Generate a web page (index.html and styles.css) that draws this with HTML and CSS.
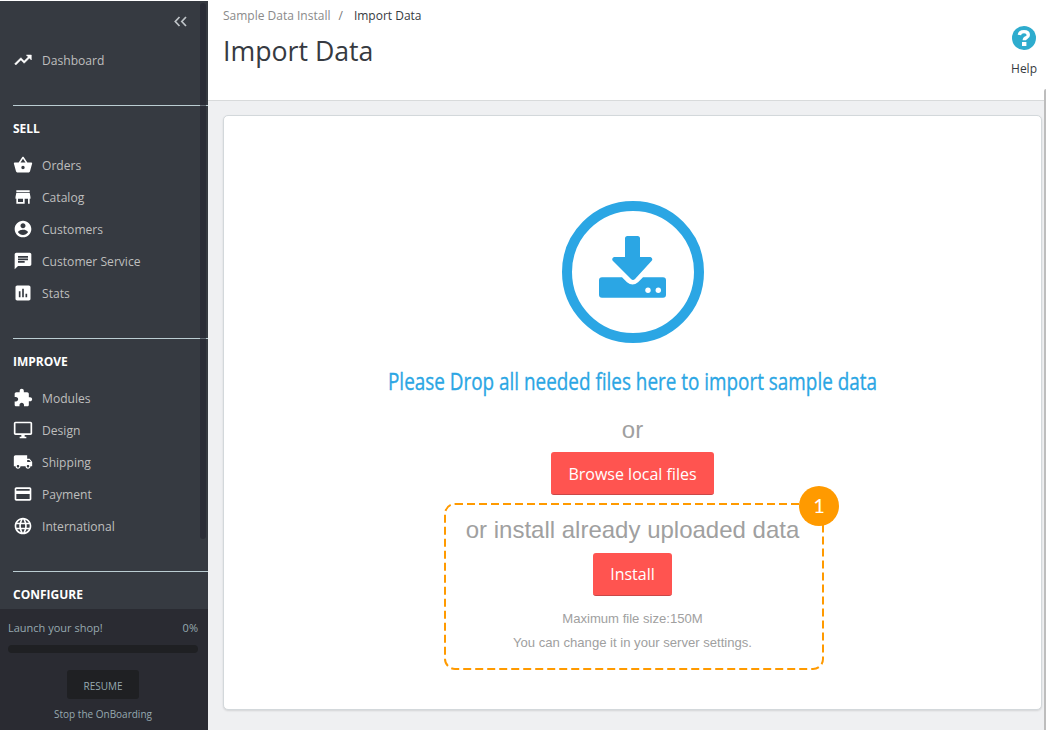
FILE: index.html
```html
<!DOCTYPE html>
<html lang="en">
<head>
<meta charset="utf-8">
<title>Import Data</title>
<link rel="stylesheet" href="styles.css">
</head>
<body>
<div class="app">
  <aside class="sidebar">
    <nav class="nav">
      <div class="collapse"><svg width="14" height="11" viewBox="0 0 14 11"><path d="M6.500 1 2.300 5.500 6.500 10M13 1 8.800 5.500l4.200 4.500" fill="none" stroke="#bfc4c8" stroke-width="1.7"/></svg></div>
      <a class="item dash"><svg class="ico" viewBox="0 0 24 24"><path d="M16 6l2.290 2.290-4.880 4.880-4-4L2 16.590 3.410 18l6-6 4 4 6.300-6.290L22 12V6z" stroke="#fff" stroke-width=".6"/></svg><span>Dashboard</span></a>
      <section class="group">
        <h2>SELL</h2>
        <a class="item"><svg class="ico" viewBox="0 0 24 24"><path d="M17.210 9l-4.380-6.560c-.19-.28-.51-.42-.83-.42-.32 0-.64.14-.83.43L6.790 9H2c-.55 0-1 .45-1 1 0 .09.01.18.04.27l2.540 9.270c.23.84 1 1.460 1.920 1.460h13c.92 0 1.690-.62 1.930-1.460l2.540-9.270L23 10c0-.55-.45-1-1-1h-4.790zM9 9l3-4.400L15 9H9zm3 8c-1.100 0-2-.9-2-2s.9-2 2-2 2 .9 2 2-.9 2-2 2z"/></svg><span>Orders</span></a>
        <a class="item"><svg class="ico" viewBox="0 0 24 24"><path d="M20 4H4v2h16V4zm1 10v-2l-1-5H4l-1 5v2h1v6h10v-6h4v6h2v-6h1zm-9 4H6v-4h6v4z"/></svg><span>Catalog</span></a>
        <a class="item"><svg class="ico" viewBox="0 0 24 24"><path d="M12 2C6.480 2 2 6.480 2 12s4.480 10 10 10 10-4.480 10-10S17.520 2 12 2zm0 3c1.660 0 3 1.340 3 3s-1.340 3-3 3-3-1.340-3-3 1.340-3 3-3zm0 14.200c-2.500 0-4.710-1.280-6-3.220.03-1.990 4-3.080 6-3.080 1.990 0 5.970 1.090 6 3.080-1.290 1.940-3.500 3.220-6 3.220z"/></svg><span>Customers</span></a>
        <a class="item"><svg class="ico" viewBox="0 0 24 24"><path d="M20 2H4c-1.100 0-1.990.9-1.990 2L2 22l4-4h14c1.100 0 2-.9 2-2V4c0-1.100-.9-2-2-2zM6 9h12v2H6V9zm8 5H6v-2h8v2zm4-6H6V6h12v2z"/></svg><span>Customer Service</span></a>
        <a class="item"><svg class="ico" viewBox="0 0 24 24"><path d="M19 3H5c-1.100 0-2 .9-2 2v14c0 1.100.9 2 2 2h14c1.100 0 2-.9 2-2V5c0-1.100-.9-2-2-2zM9 17H7v-7h2v7zm4 0h-2V7h2v10zm4 0h-2v-4h2v4z"/></svg><span>Stats</span></a>
      </section>
      <section class="group">
        <h2>IMPROVE</h2>
        <a class="item"><svg class="ico" viewBox="0 0 24 24"><path d="M20.500 11H19V7c0-1.100-.9-2-2-2h-4V3.500C13 2.120 11.880 1 10.500 1S8 2.120 8 3.500V5H4c-1.100 0-1.990.9-1.990 2v3.800H3.500c1.490 0 2.700 1.210 2.700 2.700s-1.210 2.700-2.700 2.700H2V20c0 1.100.9 2 2 2h3.800v-1.500c0-1.490 1.210-2.700 2.700-2.700 1.490 0 2.700 1.210 2.700 2.700V22H17c1.100 0 2-.9 2-2v-4h1.500c1.380 0 2.500-1.120 2.500-2.500S21.880 11 20.500 11z"/></svg><span>Modules</span></a>
        <a class="item"><svg class="ico" viewBox="0 0 24 24"><path d="M21 2H3c-1.100 0-2 .9-2 2v12c0 1.100.9 2 2 2h7v2H8v2h8v-2h-2v-2h7c1.100 0 2-.9 2-2V4c0-1.100-.9-2-2-2zm0 14H3V4h18v12z"/></svg><span>Design</span></a>
        <a class="item"><svg class="ico" viewBox="0 0 24 24"><path d="M20 8h-3V4H3c-1.100 0-2 .9-2 2v11h2c0 1.660 1.340 3 3 3s3-1.340 3-3h6c0 1.660 1.340 3 3 3s3-1.340 3-3h2v-5l-3-4zM6 18.500c-.83 0-1.500-.67-1.500-1.500s.67-1.500 1.500-1.500 1.500.67 1.500 1.500-.67 1.500-1.500 1.500zm13.500-9l1.960 2.500H17V9.500h2.500zm-1.500 9c-.83 0-1.500-.67-1.500-1.500s.67-1.500 1.500-1.500 1.500.67 1.500 1.500-.67 1.500-1.500 1.500z"/></svg><span>Shipping</span></a>
        <a class="item"><svg class="ico" viewBox="0 0 24 24"><path d="M20 4H4c-1.110 0-1.990.89-1.990 2L2 18c0 1.110.89 2 2 2h16c1.110 0 2-.89 2-2V6c0-1.110-.89-2-2-2zm0 14H4v-6h16v6zm0-10H4V6h16v2z"/></svg><span>Payment</span></a>
        <a class="item"><svg class="ico" viewBox="0 0 24 24"><path d="M11.990 2C6.470 2 2 6.480 2 12s4.470 10 9.990 10C17.520 22 22 17.520 22 12S17.520 2 11.990 2zm6.930 6h-2.950c-.32-1.250-.78-2.450-1.380-3.560 1.840.63 3.370 1.910 4.330 3.560zM12 4.040c.83 1.200 1.480 2.530 1.910 3.960h-3.820c.43-1.430 1.080-2.760 1.910-3.960zM4.260 14C4.100 13.360 4 12.690 4 12s.1-1.360.26-2h3.380c-.08.66-.14 1.320-.14 2s.06 1.340.14 2H4.260zm.82 2h2.950c.32 1.250.78 2.450 1.380 3.560-1.840-.63-3.370-1.900-4.330-3.560zm2.950-8H5.080c.96-1.660 2.490-2.930 4.330-3.560C8.810 5.550 8.350 6.750 8.030 8zM12 19.960c-.83-1.200-1.480-2.530-1.910-3.960h3.820c-.43 1.430-1.080 2.760-1.910 3.960zM14.340 14H9.660c-.09-.66-.16-1.320-.16-2s.07-1.350.16-2h4.680c.09.65.16 1.320.16 2s-.07 1.340-.16 2zm.25 5.560c.6-1.110 1.060-2.310 1.380-3.560h2.950c-.96 1.650-2.490 2.930-4.330 3.560zM16.360 14c.08-.66.14-1.320.14-2s-.06-1.340-.14-2h3.380c.16.64.26 1.310.26 2s-.1 1.360-.26 2h-3.380z"/></svg><span>International</span></a>
      </section>
      <section class="group"><h2>CONFIGURE</h2></section>
      <i class="thumb"></i>
    </nav>
    <div class="onboarding">
      <div class="launch"><span>Launch your shop!</span><span class="pct">0%</span></div>
      <div class="progress"></div>
      <button class="resume">RESUME</button>
      <a class="stop">Stop the OnBoarding</a>
    </div>
  </aside>
  <main class="main">
    <header class="header">
      <div>
        <div class="crumbs"><span>Sample Data Install</span><span class="sep">/</span><span class="here">Import Data</span></div>
        <h1>Import Data</h1>
      </div>
      <a class="help">
        <svg width="24" height="24" viewBox="0 0 24 24"><circle cx="12" cy="12" r="12" fill="#2eacce"/><path d="M7.400 9Q7.700 5.600 12 5.600q4.300 0 4.300 3.300 0 1.700-1.800 2.700-2.200 1-2.200 2.700" fill="none" stroke="#fff" stroke-width="3.400"/><path d="M10 16h4.400v4h-4.400z" fill="#fff"/></svg>
        <span>Help</span>
      </a>
    </header>
    <div class="content">
      <div class="card">
        <svg class="drop" width="142" height="142" viewBox="0 0 142 142" fill="#2ba6e4">
          <circle cx="71" cy="71" r="66" fill="none" stroke="#2ba6e4" stroke-width="10"/>
          <path d="M65.500 35h10q2.500 0 2.500 2.500V56h10.500q3 1.500 1 4L73 78q-2 2-4 0L51 60q-2-2.500 1-4h11V37.500q0-2.500 2.500-2.500z"/>
          <path d="M40 76.300h20l5 5q5.700 4.500 11 0l5-5h20q3 0 3 3v14.500q0 3-3 3H40q-3 0-3-3v-14.500q0-3 3-3z"/>
          <circle cx="86" cy="89.200" r="2.700" fill="#fff"/><circle cx="96.300" cy="89.200" r="2.700" fill="#fff"/>
        </svg>
        <svg class="title" width="500" height="34"><text x="5" y="25" textLength="489" lengthAdjust="spacingAndGlyphs">Please Drop all needed files here to import sample data</text></svg>
        <p class="or">or</p>
        <button class="btn browse">Browse local files</button>
        <div class="install-box">
          <svg class="dashes" width="380" height="167"><rect x="1" y="1" width="378" height="165" rx="10" fill="none" stroke="#ff9a00" stroke-width="2" stroke-dasharray="8 4"/></svg>
          <p class="or">or install already uploaded data</p>
          <button class="btn install">Install</button>
          <p class="note">Maximum file size:150M</p>
          <p class="note">You can change it in your server settings.</p>
          <b class="badge">1</b>
        </div>
      </div>
    </div>
    <i class="page-thumb"></i>
  </main>
</div>
</body>
</html>
```
FILE: styles.css
```css
* { box-sizing: border-box; }
body { margin: 0; background: #fff; font-family: "Open Sans", sans-serif; overflow: hidden; }
h1, h2, p { margin: 0; font-weight: 400; }
button { border: 0; padding: 0; font-family: inherit; }
.app { display: flex; height: 730px; }

.sidebar { width: 208px; margin-top: 1px; background: #363a41; display: flex; flex-direction: column; }
.nav { height: 608px; position: relative; overflow: hidden; }
.collapse { height: 43px; padding: 15px 21px 0 0; text-align: right; line-height: 0; }
.item { display: flex; align-items: center; height: 32px; padding-left: 12.5px; gap: 9.5px; color: #bebebe; font-size: 12.1px; }
.ico { width: 20px; height: 20px; fill: #fff; }
.dash { margin-bottom: 29px; }
.group { margin-left: 13px; border-top: 1px solid #bbcdd2; padding-bottom: 29px; }
.group .item { padding-left: 0; margin-left: -.5px; }
.group h2 { height: 43px; padding-top: 14px; line-height: 18px; font-size: 12px; font-weight: 700; color: #fff; }
.thumb { position: absolute; left: 200px; top: 2px; width: 6px; height: 536px; border-radius: 3px; background: rgba(37, 37, 48, .6); }

.onboarding { flex: 1; background: #2a2b32; padding: 10px 10px 0 8px; color: #96a9b0; display: flex; flex-direction: column; align-items: center; }
.launch { align-self: stretch; display: flex; justify-content: space-between; font-size: 11px; line-height: 18px; }
.progress { align-self: stretch; height: 8px; margin-top: 8px; border-radius: 4px; background: #1f2023; }
.resume { width: 72px; height: 29px; margin-top: 17px; padding-top: 2px; border-radius: 3px; background: #1f2023; color: #96a9b0; font-size: 10px; }
.stop { margin-top: 7px; font-size: 10px; line-height: 16px; }

.main { flex: 1; position: relative; display: flex; flex-direction: column; background: #eff0f2; }
.header { height: 101px; background: #fff; border-bottom: 1px solid #d8dadb; display: flex; justify-content: space-between; padding: 7px 9px 0 15px; }
.crumbs { font-size: 12px; line-height: 18px; color: #8a8a8a; display: flex; }
.sep { margin: 0 11px 0 8px; color: #777; }
.here { color: #363a41; }
h1 { font-size: 26.7px; line-height: 34px; margin-top: 9px; color: #363a41; }
.help { display: flex; flex-direction: column; align-items: center; margin-top: 19px; font-size: 12px; line-height: 18px; color: #363a41; }
.help span { margin-top: 10px; }

.content { flex: 1; padding: 14px 4px 20px 15px; }
.card { height: 595px; background: #fff; border: 1px solid #d3d8db; border-radius: 5px; box-shadow: 0 1px 2px rgba(0, 0, 0, .12); display: flex; flex-direction: column; align-items: center; padding-top: 85px; }
.title { margin-top: 22px; font-size: 23.5px; fill: #2ba6e4; stroke: #2ba6e4; stroke-width: .35px; font-family: "Open Sans", sans-serif; }
.or { font-family: "Liberation Sans", Arial, sans-serif; font-size: 24px; line-height: 28px; color: #a0a0a0; }
.title + .or { margin-top: 17px; }
.btn { height: 43px; border-radius: 3px; background: #ff5450; border-bottom: 1px solid #c94747; color: #fff; font-size: 16px; }
.browse { width: 163px; margin-top: 8px; padding-top: 2px; flex: none; }
.install-box { position: relative; width: 380px; height: 167px; margin-top: 8px; margin-left: 3px; padding-top: 13px; display: flex; flex-direction: column; align-items: center; }
.install-box > .or, .install-box > .btn, .install-box > .note { margin-right: 3px; }
.install { width: 79px; margin-top: 9px; }
.note { font-family: "Liberation Sans", Arial, sans-serif; font-size: 13.1px; line-height: 24px; color: #a0a0a0; }
.install + .note { margin-top: 11px; }
.dashes { position: absolute; left: 0; top: 0; }
.badge { position: absolute; left: 355px; top: -17px; width: 40px; height: 40px; border-radius: 50%; background: #ff9a00; color: #fff; font: 400 20px/39px Lato, sans-serif; text-align: center; }
.page-thumb { position: absolute; right: 0; top: 89px; width: 2px; height: 641px; border-radius: 2px 0 0 0; background: #bdbdbd; }
```
